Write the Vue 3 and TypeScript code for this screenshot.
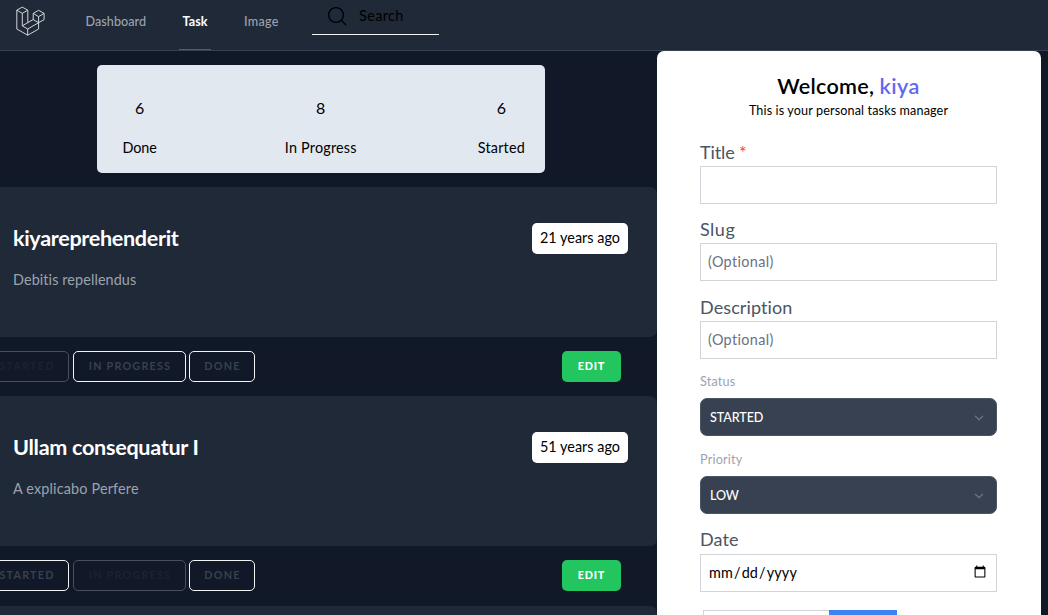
<script setup lang="ts">
import { ref } from 'vue'

type Status = 'started' | 'progress' | 'done'
interface Task { title: string; body: string; age: string; status: Status }

const links = [
  { label: 'Dashboard', key: 'dashboard', active: false },
  { label: 'Task', key: 'task', active: true },
  { label: 'Image', key: 'image', active: false },
]
const stats = [
  { count: 6, label: 'Done', key: 'done' },
  { count: 8, label: 'In Progress', key: 'progress' },
  { count: 6, label: 'Started', key: 'started' },
]
const tasks: Task[] = [
  { title: 'kiyareprehenderit', body: 'Debitis repellendus', age: '21 years ago', status: 'started' },
  { title: 'Ullam consequatur I', body: 'A explicabo Perfere', age: '51 years ago', status: 'progress' },
]
const states: { key: Status; label: string }[] = [
  { key: 'started', label: 'STARTED' },
  { key: 'progress', label: 'IN PROGRESS' },
  { key: 'done', label: 'DONE' },
]
const title = ref('')
const slug = ref('')
const description = ref('')
const date = ref('')
</script>

<template>
  <div class="page">
    <nav class="nav">
      <svg class="logo" viewBox="0 0 32 32" width="32" height="32">
        <path d="M1.8 6.2 7.3 3.1l5.5 3.1-5.5 3.1zM1.8 6.2V25l10.9 6.2L23.6 25v-6.3M7.3 9.3v12.5l5.4 3.2v6.2M12.8 6.2v12.4M7.3 21.8l10.9-6.3 5.4 3.2L12.7 25M18.2 9.4l5.4-3.1 5.5 3.1-5.5 3.2zM18.2 9.4v6.1M29.1 9.4v6.2l-5.5 3.1v-6.1" />
      </svg>
      <div class="links">
        <a v-for="l in links" :key="l.key" class="link" :class="[l.key, { active: l.active }]">{{ l.label }}</a>
      </div>
      <div class="search">
        <svg viewBox="0 0 24 24" width="24" height="24"><circle cx="11" cy="11" r="7.4" /><path d="m16.5 16.5 4.3 4.3" /></svg>
        <span>Search</span>
      </div>
    </nav>

    <div class="content">
      <main class="main">
        <section class="stats">
          <div v-for="s in stats" :key="s.key" class="stat" :class="s.key">
            <span class="count">{{ s.count }}</span>
            <span class="label">{{ s.label }}</span>
          </div>
        </section>

        <template v-for="t in tasks" :key="t.title">
          <article class="card">
            <div class="card-text">
              <h2 :class="t.status">{{ t.title }}</h2>
              <p :class="t.status">{{ t.body }}</p>
            </div>
            <span class="age">{{ t.age }}</span>
          </article>
          <div class="actions">
            <button v-for="s in states" :key="s.key" class="state" :class="s.key" :disabled="s.key === t.status">{{ s.label }}</button>
            <button class="edit">EDIT</button>
          </div>
        </template>
        <article class="card next"></article>
      </main>

      <aside class="panel">
        <h1><span class="hello">Welcome,</span> <span class="name">kiya</span></h1>
        <p class="sub">This is your personal tasks manager</p>
        <form class="form">
          <label class="big title-label">Title <span class="req">*</span></label>
          <input v-model="title" class="field" type="text" />
          <label class="big slug-label">Slug</label>
          <input v-model="slug" class="field" type="text" placeholder="(Optional)" />
          <label class="big desc-label">Description</label>
          <input v-model="description" class="field desc" type="text" placeholder="(Optional)" />
          <label class="small status-label">Status</label>
          <div class="select"><span>STARTED</span><svg viewBox="0 0 20 20" width="18" height="18"><path d="m6 8 4 4 4-4" /></svg></div>
          <label class="small">Priority</label>
          <div class="select"><span class="low">LOW</span><svg viewBox="0 0 20 20" width="18" height="18"><path d="m6 8 4 4 4-4" /></svg></div>
          <label class="big date-label">Date</label>
          <input v-model="date" class="field date" type="date" />
          <div class="tags"><span class="tag-input"></span><span class="tag-button"></span></div>
        </form>
      </aside>
    </div>
  </div>
</template>

<style>
body { margin: 0; background: #111827; }
</style>

<style scoped>
* { box-sizing: border-box; }
.page { height: 615px; overflow: hidden; display: flex; flex-direction: column; background: #111827; font-family: Lato, "Open Sans", sans-serif; font-size: 14.4px; color: #000; font-variant-ligatures: none; }
h1, h2, p { margin: 0; }
button, input { font-family: inherit; margin: 0; font-variant-ligatures: none; }
.nav { flex: none; height: 51px; display: flex; background: #1f2937; border-bottom: 1px solid #374151; }
.logo { margin: 4px 0 0 15px; fill: none; stroke: #e5e7eb; stroke-width: .9; stroke-linejoin: round; }
.links { display: flex; gap: 29px; margin-left: 35px; }
.link { height: 50px; padding: 0 3px; line-height: 44px; font-size: 12.6px; font-weight: 500; color: #9ca3af; border-bottom: 1px solid transparent; }
.link.dashboard { width: 68px; padding-left: 3.5px; letter-spacing: .05px; }
.link.task { width: 32px; padding-left: 3.5px; letter-spacing: .05px; }
.link.image { width: 43px; padding-left: 4px; letter-spacing: .3px; }
.link.active { color: #fff; font-weight: 700; border-color: #4f46e5; }
.search { width: 127px; height: 35px; margin-left: 29px; padding-left: 13px; display: flex; gap: 10px; border-bottom: 1px solid #f3f4f6; line-height: 31px; letter-spacing: .4px; }
.search svg { margin-top: 4px; fill: none; stroke: #000; stroke-width: 1.4; stroke-linecap: round; }
.content { flex: 1; display: flex; min-height: 0; }
.main { width: 657px; flex: none; overflow: hidden; }
.stats { width: 448px; height: 108px; margin: 14px 0 14px 97px; padding: 32px 20px 0 25.5px; display: flex; justify-content: space-between; background: #e2e8f0; border-radius: 5px; }
.stat { display: flex; flex-direction: column; align-items: center; gap: 18px; white-space: nowrap; }
.stat.done .label { letter-spacing: -.1px; }
.stat.progress { margin-left: 7px; }
.stat .count { font-size: 16px; line-height: 22px; }
.stat .label { line-height: 21px; letter-spacing: .2px; }
.card { height: 150px; padding: 36px 29px 0 13px; display: flex; justify-content: space-between; align-items: flex-start; background: #1f2937; border-radius: 0 7px 7px 0; }
.card.next { margin-top: 1px; }
.card h2 { font-size: 21.6px; line-height: 30px; font-weight: 700; color: #fff; }
.card h2.started { letter-spacing: -.33px; }
.card h2.progress { letter-spacing: -.3px; }
.card p { margin-top: 16px; line-height: 21px; color: #9ca3af; }
.card p.started { letter-spacing: .1px; }
.card p.progress { letter-spacing: .17px; }
.age { width: 96px; height: 31px; line-height: 30px; text-align: center; white-space: nowrap; background: #fff; border-radius: 5px; letter-spacing: .03px; }
.actions { height: 59px; padding: 14px 36px 0 0; display: flex; }
.state, .edit { flex: none; height: 31px; padding: 0 0 2px 1px; border-radius: 5px; font-size: 10.8px; letter-spacing: 1.2px; }
.state { border: 1px solid #f3f4f6; background: transparent; color: #374151; font-weight: 700; }
.state:disabled { opacity: .25; border-color: #f3f4f6; }
.state.started { width: 85px; margin-left: -16px; }
.state.progress { width: 113px; margin-left: 4px; }
.state.done { width: 66px; margin-left: 3px; }
.edit { width: 59px; margin-left: auto; padding-left: 0; border: 0; background: #22c55e; color: #fff; font-weight: 900; letter-spacing: .8px; }
.panel { width: 384px; flex: none; background: #fff; border-radius: 7px 7px 0 0; padding: 20px 44px 0 43px; overflow: hidden; }
.panel h1 { text-align: center; font-size: 21.6px; line-height: 31px; font-weight: 600; }
.hello { letter-spacing: .25px; }
.name { color: #6366f1; letter-spacing: .4px; }
.sub { text-align: center; font-size: 12.6px; line-height: 17px; letter-spacing: .13px; white-space: nowrap; }
.form { display: flex; flex-direction: column; padding-top: 21px; }
.big { height: 26px; line-height: 24px; font-size: 18px; color: #4b5563; letter-spacing: .1px; }
.title-label { letter-spacing: -.1px; }
.slug-label { letter-spacing: .5px; }
.req { color: #ef4444; }
.field { width: 100%; height: 38px; margin-bottom: 13px; padding: 0 7px 1px; border: 1px solid #d1d5db; border-radius: 0; background: #fff; font-size: 14.4px; color: #000; outline: 0; letter-spacing: .15px; }
.field[type="text"] { letter-spacing: .35px; }
.desc { padding-bottom: 2px; }
.desc-label { margin-top: 1px; }
.field::placeholder { color: #6b7280; opacity: 1; }
.small { height: 18px; line-height: 20px; font-size: 12.6px; color: #9ca3af; margin-bottom: 8px; letter-spacing: .2px; }
.select { height: 38px; display: flex; align-items: center; justify-content: space-between; padding: 0 8px 0 9px; margin-bottom: 14px; background: #374151; border: 1px solid #4b5563; border-radius: 7px; color: #fff; font-size: 12.6px; font-weight: 500; letter-spacing: -.1px; }
.select svg { margin-top: 1px; fill: none; stroke: #6b7280; stroke-width: 1.5; stroke-linecap: round; stroke-linejoin: round; }
.date-label { line-height: 23px; }
.date { margin-bottom: 18px; padding: 0 7px 2px; }
.tags { display: flex; margin-left: 3px; }
.tag-input { width: 126px; height: 30px; border: 1px solid #d1d5db; border-right: 0; }
.tag-button { width: 68px; height: 30px; background: #3b82f6; }
</style>
